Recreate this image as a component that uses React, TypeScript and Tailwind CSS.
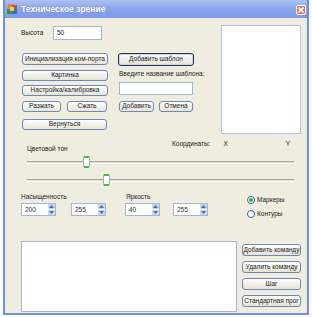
import type { ReactNode } from "react";

const font = { fontFamily: '"Liberation Sans", Arial, sans-serif' };

const Btn = ({
  children,
  className = "",
  main = false,
}: {
  children: ReactNode;
  className?: string;
  main?: boolean;
}) => (
  <div
    className={`flex items-center justify-center whitespace-nowrap overflow-hidden rounded-[3px] bg-gradient-to-b from-white to-[#e6e3d6] text-[6.5px] leading-none text-[#222] ${
      main ? "border border-[#25324a] shadow-[inset_0_0_0_1px_#c9d4ea]" : "border border-[#7088b4]"
    } ${className}`}
  >
    {children}
  </div>
);

const Spin = ({ value, className = "" }: { value: string; className?: string }) => (
  <div className={`flex h-[13px] w-[35px] border border-[#a3b8d0] bg-white ${className}`}>
    <div className="flex-1 pl-[3px] text-[6.5px] leading-[11px] text-[#333]">{value}</div>
    <div className="flex w-[7px] flex-col bg-[#c9d6f4]">
      <div className="flex flex-1 items-center justify-center border-b border-white">
        <svg width="5" height="3" viewBox="0 0 5 3">
          <path d="M0 3 L2.5 0 L5 3 Z" fill="#5470a8" />
        </svg>
      </div>
      <div className="flex flex-1 items-center justify-center">
        <svg width="5" height="3" viewBox="0 0 5 3">
          <path d="M0 0 L2.5 3 L5 0 Z" fill="#5470a8" />
        </svg>
      </div>
    </div>
  </div>
);

const Slider = ({ at, className = "" }: { at: number; className?: string }) => (
  <div className={`relative ml-[6px] flex h-[12px] w-[267px] items-center ${className}`}>
    <div className="h-[3px] w-full border-t border-t-[#a7a59a] border-b border-b-white bg-[#e3e0d2]" />
    <div
      className="absolute top-0 h-[12px] w-[7px] rounded-[2px] border-x border-x-[#a8b0b8] border-y-2 border-y-[#3cbf3c] bg-white"
      style={{ left: at }}
    />
  </div>
);

const Radio = ({ label, on = false }: { label: string; on?: boolean }) => (
  <div className="flex h-[14px] items-center gap-[2px]">
    <div className="flex h-[8px] w-[8px] items-center justify-center rounded-full border border-[#3d5f94] bg-white">
      {on && <div className="h-[4px] w-[4px] rounded-full bg-[#3ab43a]" />}
    </div>
    <span className="text-[6.5px] text-[#222]">{label}</span>
  </div>
);

export default function App() {
  return (
    <div className="h-[317px] w-[312px] bg-white" style={font}>
      <div className="ml-[3px] flex h-[315px] w-[306px] flex-col bg-[#6f8fe4] px-[2px] pb-[2px]">
        {/* title bar */}
        <div className="flex h-[18px] items-center bg-gradient-to-b from-[#adc1f2] via-[#89a4ec] to-[#7b99e6] pl-[2px] pr-[1px]">
          <svg width="11" height="11" viewBox="0 0 11 11">
            <rect x="1" y="0" width="5" height="4" fill="#e08a2a" />
            <rect x="5" y="1" width="5" height="4" fill="#d24a3a" />
            <rect x="0" y="5" width="5" height="5" fill="#3a9a3a" />
            <rect x="5" y="5" width="5" height="5" fill="#3a6ad0" />
            <rect x="3" y="3" width="4" height="4" fill="#f2d04a" />
          </svg>
          <span className="ml-[3px] text-[8.5px] font-bold text-white [text-shadow:0_0_1px_#5a76c0]">
            Техническое зрение
          </span>
          <div className="ml-auto mt-[2px] flex h-[10px] w-[10px] items-center justify-center rounded-[2px] border border-white bg-[#d87a62]">
            <svg width="6" height="6" viewBox="0 0 6 6">
              <path d="M0.5 0.5 L5.5 5.5 M5.5 0.5 L0.5 5.5" stroke="white" strokeWidth="1.6" />
            </svg>
          </div>
        </div>

        {/* client area */}
        <div className="flex-1 bg-[#efede0] pl-[16px] text-[6.5px] text-[#222]">
          <div className="flex">
            <div className="w-[180px]">
              <div className="mt-[8px] flex h-[14px] items-center">
                <span className="w-[32px]">Высота</span>
                <div className="h-[14px] w-[49px] border border-[#a3b8d0] bg-white pl-[3px] leading-[12px]">50</div>
              </div>
              <div className="mt-[13px] flex">
                <div className="ml-[1px] flex w-[86px] flex-col">
                  <Btn className="h-[12px] w-[86px]">Инициализация ком-порта</Btn>
                  <Btn className="mt-[5px] h-[11px] w-[86px]">Картинка</Btn>
                  <Btn className="mt-[4px] h-[11px] w-[86px]">Настройка/калибровка</Btn>
                  <div className="mt-[5px] flex gap-[6px]">
                    <Btn className="h-[11px] w-[39px]">Разжать</Btn>
                    <Btn className="h-[11px] w-[40px]">Сжать</Btn>
                  </div>
                  <Btn className="mt-[7px] h-[11px] w-[85px]">Вернуться</Btn>
                </div>
                <div className="ml-[10px] flex flex-col">
                  <Btn main className="h-[13px] w-[76px]">Добавить шаблон</Btn>
                  <div className="mt-[2px] ml-[1px] h-[12px] whitespace-nowrap leading-[12px]">Введите название шаблона:</div>
                  <div className="mt-[2px] ml-[1px] h-[13px] w-[74px] border border-[#a3b8d0] bg-white" />
                  <div className="mt-[6px] ml-[1px] flex gap-[5px]">
                    <Btn className="h-[11px] w-[35px]">Добавить</Btn>
                    <Btn className="h-[11px] w-[34px]">Отмена</Btn>
                  </div>
                </div>
              </div>
            </div>
            <div className="ml-[20px] mt-[7px] h-[109px] w-[80px] border border-[#b5c4d4] bg-white" />
          </div>

          {/* coordinates + hue */}
          <div className="mt-[5px] flex h-[15px]">
            <span className="ml-[6px] w-[145px] self-end leading-[10px]">Цветовой тон</span>
            <span className="leading-[10px]">Координаты:</span>
            <span className="ml-[13px] leading-[10px]">X</span>
            <span className="ml-[58px] leading-[10px]">Y</span>
          </div>

          <Slider at={56} className="mt-[2px]" />
          <Slider at={76} className="mt-[6px]" />

          {/* hsv inputs */}
          <div className="mt-[6px] flex">
            <div>
              <div className="flex h-[10px] leading-[10px]">
                <span className="w-[105px]">Насыщенность</span>
                <span>Яркость</span>
              </div>
              <div className="mt-[1px] flex">
                <Spin value="200" />
                <Spin value="255" className="ml-[15px]" />
                <Spin value="40" className="ml-[19px]" />
                <Spin value="255" className="ml-[13px]" />
              </div>
            </div>
            <div className="ml-[39px] mt-[1px] flex flex-col">
              <Radio label="Маркеры" on />
              <Radio label="Контуры" />
            </div>
          </div>

          {/* commands */}
          <div className="mt-[20px] flex">
            <div className="h-[71px] w-[216px] border border-[#a3b8d0] bg-white" />
            <div className="ml-[5px] mt-[3px] flex flex-col gap-[5px]">
              <Btn className="h-[12px] w-[59px]">Добавить команду</Btn>
              <Btn className="h-[12px] w-[59px]">Удалить команду</Btn>
              <Btn className="h-[12px] w-[59px]">Шаг</Btn>
              <Btn className="h-[12px] w-[59px]">Стандартная прог</Btn>
            </div>
          </div>
        </div>
      </div>
    </div>
  );
}
